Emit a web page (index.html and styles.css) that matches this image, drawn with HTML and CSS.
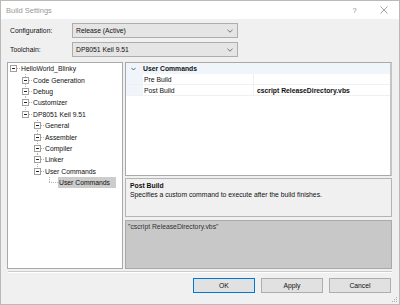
FILE: index.html
```html
<!DOCTYPE html>
<html lang="en">
<head>
    <meta charset="UTF-8">
    <title>Build Settings</title>
    <link rel="stylesheet" href="styles.css">
</head>
<body>
    <div class="window">
        <div class="titlebar">
            <span class="title">Build Settings</span>
            <span class="title-btn">?</span>
            <span class="title-btn">
                <svg width="8" height="8" viewBox="0 0 8 8"><path d="M0.5 0.5L7.5 7.5M7.5 0.5L0.5 7.5" stroke="#8a8a8a" stroke-width="0.8" fill="none"/></svg>
            </span>
        </div>

        <div class="content">
            <div class="field-row">
                <label>Configuration:</label>
                <div class="combo">
                    <span>Release (Active)</span>
                    <svg width="6" height="4" viewBox="0 0 6 4"><path d="M0.5 0.8L3 3.2L5.5 0.8" stroke="#555" stroke-width="0.8" fill="none"/></svg>
                </div>
            </div>
            <div class="field-row">
                <label>Toolchain:</label>
                <div class="combo">
                    <span>DP8051 Keil 9.51</span>
                    <svg width="6" height="4" viewBox="0 0 6 4"><path d="M0.5 0.8L3 3.2L5.5 0.8" stroke="#555" stroke-width="0.8" fill="none"/></svg>
                </div>
            </div>

            <div class="main">
                <!-- project tree -->
                <div class="tree">
                    <ul class="root">
                        <li>
                            <div class="row"><span class="exp"></span><span class="dash"></span><span class="label">HelloWorld_Blinky</span></div>
                            <ul>
                                <li><div class="row"><span class="exp plus"></span><span class="dash"></span><span class="label">Code Generation</span></div></li>
                                <li><div class="row"><span class="exp plus"></span><span class="dash"></span><span class="label">Debug</span></div></li>
                                <li><div class="row"><span class="exp plus"></span><span class="dash"></span><span class="label">Customizer</span></div></li>
                                <li>
                                    <div class="row"><span class="exp"></span><span class="dash"></span><span class="label">DP8051 Keil 9.51</span></div>
                                    <ul>
                                        <li><div class="row"><span class="exp plus"></span><span class="dash"></span><span class="label">General</span></div></li>
                                        <li><div class="row"><span class="exp plus"></span><span class="dash"></span><span class="label">Assembler</span></div></li>
                                        <li><div class="row"><span class="exp plus"></span><span class="dash"></span><span class="label">Compiler</span></div></li>
                                        <li><div class="row"><span class="exp plus"></span><span class="dash"></span><span class="label">Linker</span></div></li>
                                        <li>
                                            <div class="row"><span class="exp"></span><span class="dash"></span><span class="label">User Commands</span></div>
                                            <ul>
                                                <li><div class="row"><span class="leaf"></span><span class="label selected">User Commands</span></div></li>
                                            </ul>
                                        </li>
                                    </ul>
                                </li>
                            </ul>
                        </li>
                    </ul>
                </div>

                <div class="side">
                    <!-- property grid -->
                    <div class="grid">
                        <div class="cat-row">
                            <span class="gutter">
                                <svg width="5" height="4" viewBox="0 0 5 4"><path d="M0.4 0.8L2.5 3L4.6 0.8" stroke="#444" stroke-width="0.8" fill="none"/></svg>
                            </span>
                            <span class="cat-name">User Commands</span>
                        </div>
                        <div class="prop-row">
                            <span class="gutter"></span>
                            <span class="prop-name">Pre Build</span>
                            <span class="prop-value"></span>
                        </div>
                        <div class="prop-row">
                            <span class="gutter"></span>
                            <span class="prop-name">Post Build</span>
                            <span class="prop-value bold">cscript ReleaseDirectory.vbs</span>
                        </div>
                    </div>

                    <div class="desc">
                        <div class="desc-title">Post Build</div>
                        <div class="desc-text">Specifies a custom command to execute after the build finishes.</div>
                    </div>

                    <div class="editbox">"cscript ReleaseDirectory.vbs"</div>
                </div>
            </div>

            <div class="separator"></div>

            <div class="buttons">
                <button class="btn default">OK</button>
                <button class="btn">Apply</button>
                <button class="btn">Cancel</button>
            </div>
        </div>

        <svg class="grip" width="6" height="6" viewBox="0 0 6 6">
            <rect x="4" y="0" width="1" height="1" fill="#b0b0b0"/>
            <rect x="2" y="2" width="1" height="1" fill="#b0b0b0"/>
            <rect x="4" y="2" width="1" height="1" fill="#b0b0b0"/>
            <rect x="0" y="4" width="1" height="1" fill="#b0b0b0"/>
            <rect x="2" y="4" width="1" height="1" fill="#b0b0b0"/>
            <rect x="4" y="4" width="1" height="1" fill="#b0b0b0"/>
        </svg>
    </div>
</body>
</html>
```

FILE: styles.css
```css
* {
    margin: 0;
    padding: 0;
    box-sizing: border-box;
}

body {
    font-family: "Liberation Sans", Arial, sans-serif;
    font-size: 6.8px;
    color: #111;
    background: #fff;
}

.window {
    position: relative;
    width: 400px;
    height: 305px;
    border: 1px solid #b9b9b9;
    background: #f0f0f0;
    display: flex;
    flex-direction: column;
    overflow: hidden;
}

/* title bar */
.titlebar {
    height: 18px;
    background: #fff;
    display: flex;
    align-items: center;
    padding-left: 5px;
    color: #999;
    font-size: 7.5px;
}

.title {
    flex: 1;
}

.title-btn {
    width: 29px;
    display: flex;
    justify-content: center;
    align-items: center;
    color: #8a8a8a;
}

.title-btn:last-child {
    margin-right: 1px;
}

/* main content */
.content {
    flex: 1;
    display: flex;
    flex-direction: column;
    padding: 4px 7px 0 6px;
}

.field-row {
    display: flex;
    align-items: center;
    height: 15px;
    margin-bottom: 4px;
}

.field-row label {
    width: 65px;
    padding-left: 3px;
}

.combo {
    width: 166px;
    height: 15px;
    border: 1px solid #adadad;
    background: #e5e5e5;
    display: flex;
    align-items: center;
    justify-content: space-between;
    padding: 0 4px 0 3px;
}

.main {
    display: flex;
    gap: 2px;
    height: 207px;
    margin-top: 1px;
}

/* tree */
.tree {
    width: 116px;
    border: 1px solid #a9a9a9;
    background: #fff;
    padding-left: 2px;
}

.tree ul {
    list-style: none;
}

.tree ul ul {
    margin-left: 12px;
}

.tree ul ul > li {
    background: repeating-linear-gradient(to bottom, #b4b4b4 0 1px, transparent 1px 2px) no-repeat 3px 0 / 1px 100%;
}

.tree ul ul > li:last-child {
    background-size: 1px 6px;
}

.row {
    height: 11.4px;
    display: flex;
    align-items: center;
}

.exp {
    width: 7px;
    height: 7px;
    border: 1px solid #a0a0a0;
    background: #fff linear-gradient(#222, #222) no-repeat center / 3px 1px;
}

.exp.plus {
    background: #fff linear-gradient(#222, #222) no-repeat center / 3px 1px,
        linear-gradient(#222, #222) no-repeat center / 1px 3px;
}

.dash {
    width: 3px;
    height: 1px;
    background: repeating-linear-gradient(to right, #b4b4b4 0 1px, transparent 1px 2px);
}

.leaf {
    width: 9px;
    height: 1px;
    margin-left: 3px;
    background: repeating-linear-gradient(to right, #b4b4b4 0 1px, transparent 1px 2px);
}

.label {
    padding-left: 1px;
    white-space: nowrap;
}

.label.selected {
    background: #cccccc;
    padding: 2px 6px 2px 1px;
}

/* right side */
.side {
    flex: 1;
    display: flex;
    flex-direction: column;
}

.grid {
    height: 114px;
    border: 1px solid #a9a9a9;
    border-right: 2px solid #c4c4c4;
    background: #fff;
}

.cat-row {
    height: 11px;
    display: flex;
    align-items: center;
    background: #f0f5fb;
    font-weight: bold;
}

.gutter {
    width: 17px;
    height: 100%;
    display: flex;
    align-items: center;
    padding-left: 5px;
    background: #f0f5fb;
}

.prop-row {
    height: 11px;
    display: flex;
    align-items: center;
    border-bottom: 1px solid #f0f0f0;
}

.prop-name {
    width: 111px;
    height: 100%;
    display: flex;
    align-items: center;
    padding-left: 1px;
    border-right: 1px solid #f0f0f0;
}

.prop-value {
    padding-left: 3px;
}

.bold {
    font-weight: bold;
}

.desc {
    height: 39px;
    margin-top: 2px;
    border: 1px solid #b4b4b4;
    padding: 3px 4px;
}

.desc-title {
    font-weight: bold;
    margin-bottom: 2px;
}

.editbox {
    height: 49px;
    margin-top: 3px;
    border: 1px solid #a9a9a9;
    background: #c8c8c8;
    color: #333;
    padding: 2px 2px;
}

.separator {
    margin: 2px 0 0 1px;
    height: 2px;
    border-top: 1px solid #cdcdcd;
    border-bottom: 1px solid #fff;
}

.buttons {
    display: flex;
    justify-content: flex-end;
    gap: 6px;
    margin-top: 5px;
    padding-right: 1px;
}

.btn {
    width: 62px;
    height: 15px;
    border: 1px solid #adadad;
    background: #e1e1e1;
    font-family: inherit;
    font-size: 6.8px;
    color: #111;
}

.btn.default {
    border-color: #0078d7;
}

.grip {
    position: absolute;
    right: 1px;
    bottom: 1px;
}
```
